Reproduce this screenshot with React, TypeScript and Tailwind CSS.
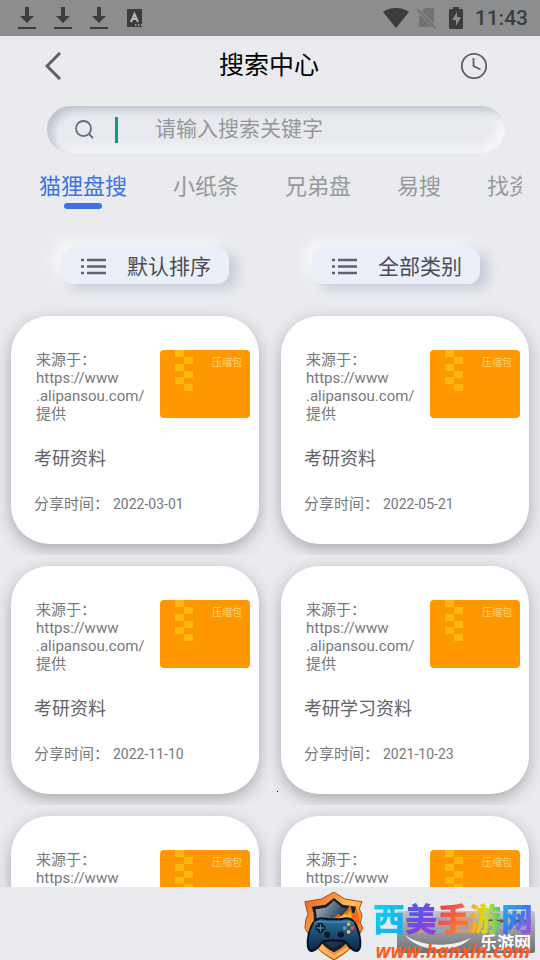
import React from "react";

const tabs = ["猫狸盘搜", "小纸条", "兄弟盘", "易搜", "找资源"];

const results = [
  { title: "考研资料", date: "2022-03-01" },
  { title: "考研资料", date: "2022-05-21" },
  { title: "考研资料", date: "2022-11-10" },
  { title: "考研学习资料", date: "2021-10-23" },
  { title: "考研资料", date: "2022-03-01" },
  { title: "考研资料", date: "2022-05-21" },
];

function DownloadIcon() {
  return (
    <svg width="18" height="24" viewBox="0 0 18 24" fill="#3b3c3e" aria-hidden="true">
      <path d="M7 1h4v9h5l-7 7-7-7h5z" />
      <path d="M0 21h18v2H0z" />
    </svg>
  );
}

function StatusBar() {
  return (
    <div className="flex h-9 shrink-0 items-center bg-[#8c8d8f] pr-3 pl-[18px]">
      <div className="flex items-center gap-[18px]">
        <DownloadIcon />
        <DownloadIcon />
        <DownloadIcon />
        <svg width="18" height="18" viewBox="0 0 18 18" aria-hidden="true">
          <path d="M1 0h15v18H1z" fill="#3b3c3e" />
          <path d="M5 13L8.500 5l3.500 8M6 10h5" fill="none" stroke="#b5b6b8" strokeWidth="2" />
          <path d="M9 16h1.500M12 16h1.500M15 16h1" stroke="#b5b6b8" strokeWidth="1.500" />
        </svg>
      </div>
      <div className="ml-auto flex items-center">
        <svg width="26" height="22" viewBox="0 0 26 22" aria-hidden="true">
          <path d="M0 5C7-.500 19-.500 26 5L13 21z" fill="#3b3c3e" />
        </svg>
        <svg className="ml-2" width="20" height="22" viewBox="0 0 20 22" aria-hidden="true">
          <path d="M8 1h9v19H2V7z" fill="#707173" />
          <path d="M0 2l18 19" stroke="#8c8d8f" strokeWidth="4" />
          <path d="M0 2l18 19" stroke="#707173" strokeWidth="2" />
        </svg>
        <svg className="ml-3" width="14" height="22" viewBox="0 0 14 22" aria-hidden="true">
          <path d="M4 0h6v2h3l1 1v18l-1 1H1l-1-1V3l1-1h3z" fill="#3b3c3e" />
          <path d="M8 5l-5 8h4v6l5-9H8z" fill="#8c8d8f" />
        </svg>
        <span className="ml-3 font-[Roboto] text-[21px] leading-6 font-medium text-[#3b3c3e]">11:43</span>
      </div>
    </div>
  );
}

function Header() {
  return (
    <header className="flex h-[60px] shrink-0 items-center justify-between pr-[52px] pl-10">
      <button type="button" aria-label="返回" className="flex w-7 justify-center">
        <svg width="18" height="28" viewBox="0 0 18 28" fill="none" stroke="#5f6062" strokeWidth="3" aria-hidden="true">
          <path d="M15 1L2 14l13 13" />
        </svg>
      </button>
      <h1 className="pl-[10px] text-[25px] leading-8 text-black">搜索中心</h1>
      <button type="button" aria-label="历史记录" className="flex w-7 justify-center">
        <svg width="28" height="28" viewBox="0 0 28 28" fill="none" stroke="#5f6062" strokeWidth="1.800" aria-hidden="true">
          <circle cx="14" cy="14" r="12.200" />
          <path d="M13.500 6V14l7 3.500" />
        </svg>
      </button>
    </header>
  );
}

function SearchBox() {
  return (
    <label className="mt-[10px] mr-[35px] ml-[47px] flex h-[47px] shrink-0 items-center rounded-full bg-[#e8eaef] pr-8 pl-[27px] shadow-[inset_6px_5px_9px_-1px_#bfc2ce,inset_-8px_-7px_10px_-2px_#f7f8fb]">
      <svg width="20" height="20" viewBox="0 0 20 20" fill="none" stroke="#666b78" strokeWidth="1.800" aria-hidden="true">
        <circle cx="9.500" cy="8.500" r="7.500" />
        <path d="M14.500 13.500l4.500 4.500" />
      </svg>
      <span className="ml-[21px] h-[26px] w-[3px] bg-[#16967f]" />
      <input
        type="text"
        aria-label="搜索关键字"
        placeholder="请输入搜索关键字"
        className="ml-[37px] min-w-0 flex-1 bg-transparent pb-[2px] text-[21px] leading-8 outline-none placeholder:text-[#96979b]"
      />
    </label>
  );
}

function Tabs() {
  return (
    <nav className="mr-[18px] ml-[39px] flex shrink-0 gap-[46px] overflow-hidden pt-[18px]">
      {tabs.map((tab, i) => (
        <button
          key={tab}
          type="button"
          className={
            i === 0
              ? "flex shrink-0 flex-col items-center text-[22px] leading-8 text-[#3c72e4]"
              : "flex shrink-0 flex-col items-center text-[22px] leading-8 text-[#98999b]"
          }
        >
          {tab}
          {i === 0 && <span className="h-[6px] w-[38px] rounded-full bg-[#3c72e4]" />}
        </button>
      ))}
    </nav>
  );
}

function FilterButton({ label }: { label: string }) {
  return (
    <button
      type="button"
      className="flex h-9 w-[168px] items-center justify-between rounded-xl bg-[#ebeff7] pr-[18px] pl-5 text-[21px] leading-8 text-[#484d58] shadow-[8px_5px_12px_#c8cbda,-7px_-6px_14px_#f7f8fb]"
    >
      <svg width="25" height="17" viewBox="0 0 25 17" stroke="#5c6270" strokeWidth="2.500" aria-hidden="true">
        <path d="M0 2h3M0 8.500h3M0 15h3M6 2h19M6 8.500h19M6 15h19" />
      </svg>
      <span className="pt-[2px]">{label}</span>
    </button>
  );
}

function ArchiveThumb() {
  return (
    <div className="relative h-[68px] w-[90px] shrink-0 overflow-hidden rounded-[4px] bg-[#ff9800]">
      <svg width="90" height="68" viewBox="0 0 90 68" fill="#ffb90c" aria-hidden="true">
        <rect x="15" y="0" width="9" height="7" rx="1" />
        <rect x="24" y="7" width="9" height="7" rx="1" />
        <rect x="15" y="14" width="9" height="7" rx="1" />
        <rect x="24" y="21" width="9" height="7" rx="1" />
        <rect x="15" y="27" width="9" height="7" rx="1" />
        <rect x="24" y="34" width="9" height="7" rx="1" />
      </svg>
      <span className="absolute top-[5px] right-2 text-[10px] leading-4 text-[#ffd27c]">压缩包</span>
    </div>
  );
}

function ResultCard({ title, date }: { title: string; date: string }) {
  return (
    <div className="overflow-hidden p-[11px]">
      <article className="h-[228px] rounded-[38px] bg-white pt-[34px] pr-[9px] pl-[23px] text-[#77787a] shadow-[0_5px_16px_#a9aaae]">
        <div className="flex h-[76px] justify-between">
          <p className="pt-px pl-[2px] text-[15px] leading-[18px]">
            来源于：
            <br />
            https://www
            <br />
            .alipansou.com/
            <br />
            提供
          </p>
          <ArchiveThumb />
        </div>
        <h2 className="mt-[21px] text-[18px] leading-6 text-[#626365]">{title}</h2>
        <p className="mt-[23px] flex items-baseline gap-2 text-[15px] leading-5">
          <span className="w-[71px] whitespace-nowrap">分享时间：</span>
          <time className="text-[14px]">{date}</time>
        </p>
      </article>
    </div>
  );
}

function ShieldLogo() {
  return (
    <svg width="62" height="70" viewBox="0 0 64 72" aria-hidden="true">
      <defs>
        <linearGradient id="rim" x1="0" y1="0" x2="1" y2="1">
          <stop offset="0" stopColor="#e65a17" />
          <stop offset="0.500" stopColor="#ffc15c" />
          <stop offset="1" stopColor="#e4460d" />
        </linearGradient>
        <linearGradient id="plate" x1="0" y1="0" x2="1" y2="1">
          <stop offset="0" stopColor="#b7c6d0" />
          <stop offset="0.500" stopColor="#29435a" />
          <stop offset="1" stopColor="#101c2b" />
        </linearGradient>
        <linearGradient id="pad" x1="0" y1="0" x2="0" y2="1">
          <stop offset="0" stopColor="#2a72a0" />
          <stop offset="1" stopColor="#0d2442" />
        </linearGradient>
      </defs>
      <path d="M32 1l11 7 18 3-3 7 3 7-2 8 3 5-4 7C53 57 45 64 32 71 19 64 11 57 6 45l-4-7 1-9 2-5-3-13 17-3z" fill="url(#rim)" stroke="#b3440f" strokeWidth="1" />
      <path d="M32 7l9 7 14 2-2 7c0 22-5 32-21 40C16 55 11 43 11 23l-2-7 14-2z" fill="#17202c" />
      <path d="M32 10l8 7 11 2-1 6c0 18-4 27-18 34-14-7-18-17-18-34l-1-6 11-2z" fill="url(#plate)" />
      <path d="M23 30c8 1 9-4 15-7-1 4 1 4 5-1 4-3 5-6 5-9 3 5 1 8 4 10 3-1 3-4 2-7 5 7 5 16 2 21l-14 4z" fill="#f46a12" />
      <path d="M30 30c6-1 9-3 13-7 1 3 5 1 6-3 2 6 1 10-2 14z" fill="#ffb72c" />
      <path d="M13 30c5-4 9-1 13-1h12c4 0 8-3 13 1 6 5 9 20 8 27-1 8-8 5-13-2-3-4-5-4-9-4H27c-4 0-6 0-9 4-5 7-12 10-13 2-1-7 2-22 8-27z" fill="url(#pad)" stroke="#07111e" strokeWidth="2" />
      <path d="M11 33c5-3 9-1 14-1h14c5 0 9-2 14 1" fill="none" stroke="#4d9bc2" strokeWidth="1" />
      <path d="M18 33v10M13 38h10" stroke="#07121e" strokeWidth="5" />
      <path d="M18 34v8M14 38h8" stroke="#5a7d92" strokeWidth="1.500" />
      <circle cx="25" cy="45" r="4" fill="#0a1a2b" stroke="#285a79" />
      <circle cx="39" cy="45" r="4" fill="#0a1a2b" stroke="#285a79" />
      <circle cx="47" cy="34" r="2" fill="#ffb22c" />
      <circle cx="51" cy="38" r="2" fill="#ff4932" />
      <circle cx="47" cy="42" r="2" fill="#f6ca38" />
      <circle cx="43" cy="38" r="2" fill="#36a6dd" />
      <path d="M18 59l14 9 14-9" fill="none" stroke="#ffbd61" strokeWidth="3" />
    </svg>
  );
}

function Footer() {
  return (
    <footer className="relative flex h-[73px] shrink-0 items-start justify-end overflow-hidden pr-[7px]">
      <div className="absolute right-[5px] bottom-[7px] h-[42px] w-[138px] overflow-hidden rounded-xs bg-linear-to-b from-[#c3c4c6] to-[#707174]">
        <svg width="138" height="42" viewBox="0 0 138 42" fill="none" aria-hidden="true">
          <path d="M8 24c18 13 48 12 66 3-17 17-53 14-66-3z" fill="#f1f2f3" />
          <path d="M12 8h16v12H12zM60 8h14v12H60z" stroke="#dc9873" strokeWidth="3" />
          <path d="M36 8h14v12H36z" stroke="#86a9d2" strokeWidth="3" />
          <path d="M90 10h18M114 10h20" stroke="#55565a" strokeWidth="3" />
        </svg>
        <span className="absolute right-1 bottom-0 text-[17px] leading-5 font-bold text-white">乐游网</span>
      </div>
      <div className="relative pt-1">
        <ShieldLogo />
      </div>
      <div className="relative ml-2 flex flex-col items-center">
        <p className="flex pt-[15px] text-[32px] leading-9 font-black">
          <span className="bg-linear-to-br from-[#08d8ec] to-[#1ca5ec] bg-clip-text text-transparent">西</span>
          <span className="bg-linear-to-br from-[#2867ee] via-[#7048e8] to-[#a733df] bg-clip-text text-transparent">美</span>
          <span className="bg-linear-to-br from-[#f12d50] to-[#ff8a0a] bg-clip-text text-transparent">手</span>
          <span className="bg-linear-to-r from-[#ff9b10] via-[#d6dd16] to-[#2ac869] bg-clip-text text-transparent">游</span>
          <span className="bg-linear-to-br from-[#16b8ef] via-[#3978ef] to-[#b42de4] bg-clip-text text-transparent">网</span>
        </p>
        <a href="#" className="pt-px font-['Open_Sans',sans-serif] text-[19px] leading-6 font-bold text-[#ff5b1d] italic">
          www.hanxin.com
        </a>
      </div>
    </footer>
  );
}

export default function App() {
  return (
    <div className="flex h-dvh flex-col overflow-hidden bg-[#eaebef] font-[Roboto,'Noto_Sans_CJK_SC',sans-serif]">
      <StatusBar />
      <Header />
      <SearchBox />
      <Tabs />
      <div className="mt-[39px] mb-[21px] flex shrink-0 justify-between pr-[60px] pl-[61px]">
        <FilterButton label="默认排序" />
        <FilterButton label="全部类别" />
      </div>
      <main className="relative grid min-h-0 flex-1 auto-rows-max grid-cols-2 overflow-hidden">
        {results.map((result, i) => (
          <ResultCard key={i} title={result.title} date={result.date} />
        ))}
        <span className="absolute top-[486px] left-[277px] size-px bg-black" />
      </main>
      <Footer />
    </div>
  );
}
